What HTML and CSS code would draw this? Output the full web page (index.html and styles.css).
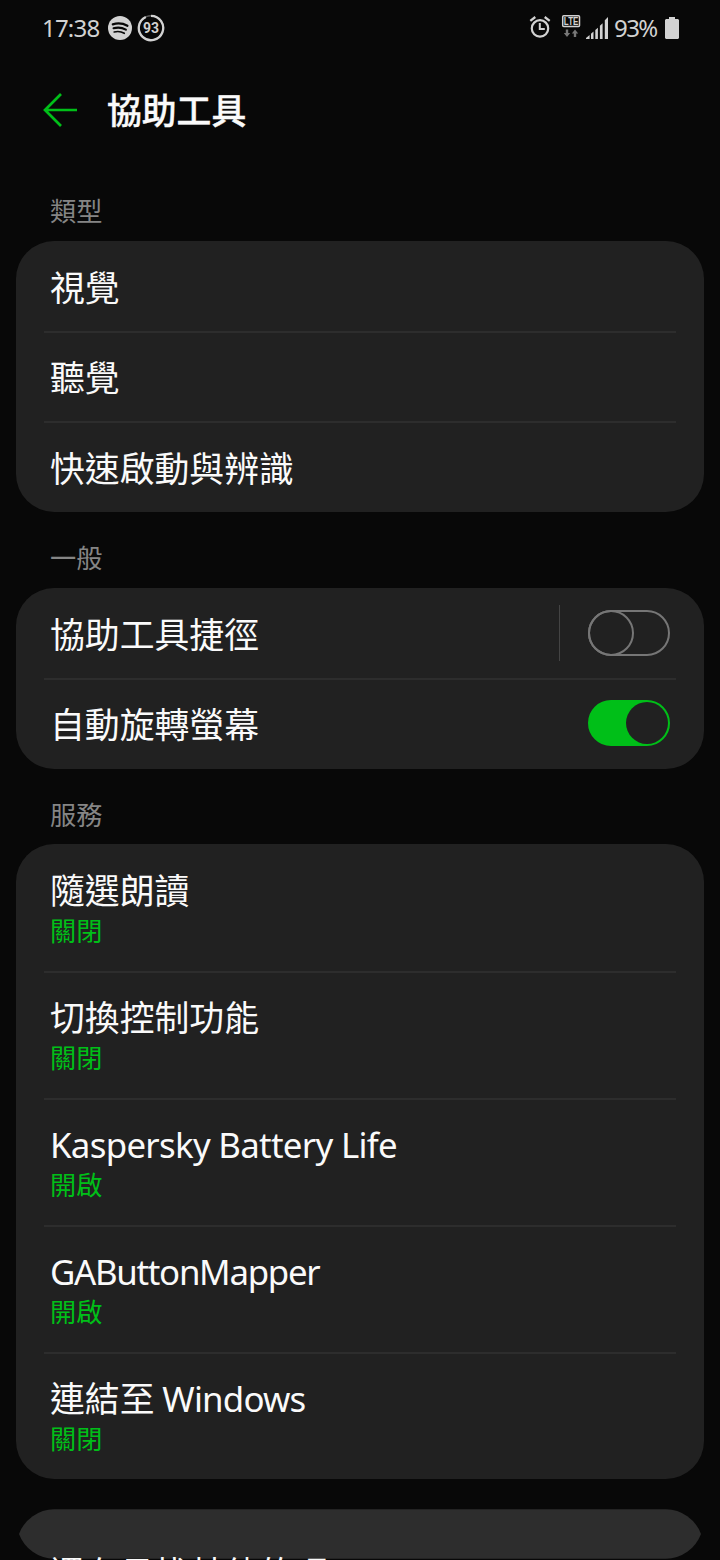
FILE: index.html
```html
<!DOCTYPE html>
<html lang="zh-Hant">
<head>
<meta charset="utf-8">
<title>協助工具</title>
<link rel="stylesheet" href="styles.css">
</head>
<body>
<div class="screen">
  <div class="status">
    <span class="clock">17:38</span>
    <svg class="spotify" width="24" height="24" viewBox="0 0 24 24"><circle cx="12" cy="12" r="12" fill="#d2d2d2"/><g fill="none" stroke="#080808" stroke-linecap="round"><path d="M4.800 8.300c5-1.400 10.300-.9 14.600 1.500" stroke-width="2.300"/><path d="M5.500 12.300c4.300-1.200 8.700-.7 12.400 1.400" stroke-width="2"/><path d="M6.200 16c3.600-.9 7-.5 10.100 1.300" stroke-width="1.600"/></g></svg>
    <svg class="ring" width="28" height="28" viewBox="0 0 28 28"><circle cx="14" cy="14" r="12.200" fill="none" stroke="#5a5a5a" stroke-width="1.600"/><path d="M14 1.800A12.200 12.200 0 1 1 8.800 2.960" fill="none" stroke="#d2d2d2" stroke-width="2.300"/><text x="14" y="19.300" text-anchor="middle" class="ring-num">93</text></svg>
    <span class="spacer"></span>
    <svg class="alarm" width="22" height="24" viewBox="0 0 22 24"><g fill="none" stroke="#d2d2d2"><circle cx="11" cy="13.400" r="8.200" stroke-width="2.200"/><path d="M10.800 8v6h5" stroke-width="2"/><path d="M1.300 5.800 6.300 2M20.700 5.800 15.700 2" stroke-width="2.300"/></g></svg>
    <svg class="lte" width="20" height="26" viewBox="0 0 20 26"><rect x="1.700" y="1.700" width="16.800" height="10.800" rx="1" fill="none" stroke="#d2d2d2" stroke-width="1.500"/><text x="10.100" y="11" text-anchor="middle" textLength="14.500" lengthAdjust="spacingAndGlyphs" class="lte-text">LTE</text><path d="M4.800 15.500h2.400V19h2L6 23l-3.200-4h2zM12.800 23h2.400v-3.500h2L14 15.500l-3.200 4h2z" fill="#777"/></svg>
    <svg class="signal" width="22" height="22" viewBox="0 0 22 22"><path d="M0 22v-1l3.600-3.100V22zM5 22v-5.200l2.500-2.300V22zM9.300 22v-9l2.600-2.300V22zM13.900 22V8.700l2.700-2.400V22zM18.800 22V3.300L22 0v22z" fill="#d2d2d2"/></svg>
    <span class="percent">93%</span>
    <svg class="battery" width="14" height="22" viewBox="0 0 14 22"><path d="M4 0h6v2h3l1 1v18l-1 1H1l-1-1V3l1-1h3z" fill="#d2d2d2"/></svg>
  </div>
  <header class="header">
    <svg class="back" width="34" height="34" viewBox="0 0 34 34"><path d="M34 17H2M18 1 2 17 18 33" fill="none" stroke="#00bf18" stroke-width="2.700"/></svg>
    <h1 class="title">協助工具</h1>
  </header>

  <h2 class="section">類型</h2>
  <div class="card">
    <div class="row">視覺</div>
    <div class="row">聽覺</div>
    <div class="row">快速啟動與辨識</div>
  </div>

  <h2 class="section">一般</h2>
  <div class="card">
    <div class="row"><span class="label">協助工具捷徑</span><span class="divider"></span><span class="toggle"><span class="knob"></span></span></div>
    <div class="row"><span class="label">自動旋轉螢幕</span><span class="toggle on"><span class="knob"></span></span></div>
  </div>

  <h2 class="section">服務</h2>
  <div class="card">
    <div class="row service"><span class="name">隨選朗讀</span><span class="state">關閉</span></div>
    <div class="row service"><span class="name">切換控制功能</span><span class="state">關閉</span></div>
    <div class="row service"><span class="name latin kasp">Kaspersky Battery Life</span><span class="state">開啟</span></div>
    <div class="row service"><span class="name latin mapper">GAButtonMapper</span><span class="state">開啟</span></div>
    <div class="row service"><span class="name">連結至 <span class="windows">Windows</span></span><span class="state">關閉</span></div>
  </div>

  <div class="suggest"><span class="suggest-text">還在尋找其他的嗎</span></div>
</div>
</body>
</html>
```
FILE: styles.css
```css
* { box-sizing: border-box; }
body { margin: 0; background: #080808; color: #fafafa; font-family: "Noto Sans", "Noto Sans CJK TC", sans-serif; }
.screen { width: 720px; height: 1560px; overflow: hidden; background: #080808; display: flex; flex-direction: column; }
.status { display: flex; align-items: center; height: 56px; flex: none; padding: 0 41px 0 42px; color: #d2d2d2; font-size: 24px; }
.clock { width: 58px; margin-right: 7.500px; padding-bottom: 2px; letter-spacing: -.8px; }
.spotify { margin: 0 5.500px 1px 0; }
.ring { margin-bottom: 1px; }
.ring-num { font: 700 14px Roboto, sans-serif; fill: #d2d2d2; }
.spacer { flex: 1; }
.alarm { margin: 0 10px 2px 0; }
.lte { margin: 0 5px 2px 0; overflow: visible; }
.lte-text { font: 700 10.500px "Liberation Sans", sans-serif; fill: #d2d2d2; }
.signal { margin: 0 6px 1px 0; }
.percent { width: 44px; margin-right: 7px; padding-bottom: 2px; letter-spacing: -1.600px; }
.battery { margin-bottom: 1px; }
.header { display: flex; align-items: center; height: 108px; flex: none; margin-bottom: 1.200px; padding: 0 0 1px 43px; gap: 30px; }
.title { margin: 0; padding-bottom: 1px; font: 500 34.800px/50px "Noto Sans CJK TC", sans-serif; -webkit-text-stroke: .4px #fafafa; }
.section { margin: 0; height: 75.500px; flex: none; padding: 26px 0 0 50px; font: 400 26.200px/38px "Noto Sans CJK TC", sans-serif; color: #858585; }
.card { margin: 0 16px; flex: none; border-radius: 38px; background: #212121; }
.row { display: flex; align-items: center; height: 90.500px; margin: 0 28px; padding: 0 6px .4px; font-family: "Noto Sans CJK TC", sans-serif; font-size: 34.850px; line-height: 50px; position: relative; }
.row + .row::before { content: ""; position: absolute; left: 0; right: 0; top: -.5px; height: 2px; background: #2d2d2d; }
.label { flex: 1; }
.divider { width: 1px; height: 56px; background: #444; margin-right: 28px; }
.toggle { width: 82px; height: 46px; border: 2px solid #767676; border-radius: 23px; display: flex; }
.knob { width: 46px; height: 46px; margin: -2px; border: 2px solid #767676; border-radius: 50%; }
.toggle.on { margin-bottom: .6px; border-color: #00bf18; background: #00bf18; justify-content: flex-end; }
.on .knob { width: 42px; height: 42px; margin: 0; border: 0; background: #212121; }
.service { height: 127px; flex-direction: column; align-items: flex-start; justify-content: flex-start; padding-top: 19.500px; }
.name { display: block; height: 50px; white-space: nowrap; }
.state { font-size: 26.200px; line-height: 32px; color: #00bf18; }
.latin { padding-top: 2px; }
.latin, .windows { font-family: "Noto Sans", sans-serif; }
.kasp { letter-spacing: -.7px; }
.mapper { letter-spacing: -1.300px; }
.windows { letter-spacing: -.8px; }
.suggest { width: 682px; height: 49.500px; flex: none; margin: 30px 19px 0; padding: 38px 31px 0; position: relative; z-index: 0; }
/* Rounded ends meet in a point on either side */
.suggest::before { content: ""; position: absolute; inset: 0; z-index: -1; background: #2d2d2d; clip-path: path("M35 0H647A38 38 0 0 1 682 24.750A38 38 0 0 1 647 49.500H35A38 38 0 0 1 0 24.750A38 38 0 0 1 35 0Z"); }
.suggest-text { display: block; white-space: nowrap; font: 400 34.850px/50px "Noto Sans CJK TC", sans-serif; }
```
